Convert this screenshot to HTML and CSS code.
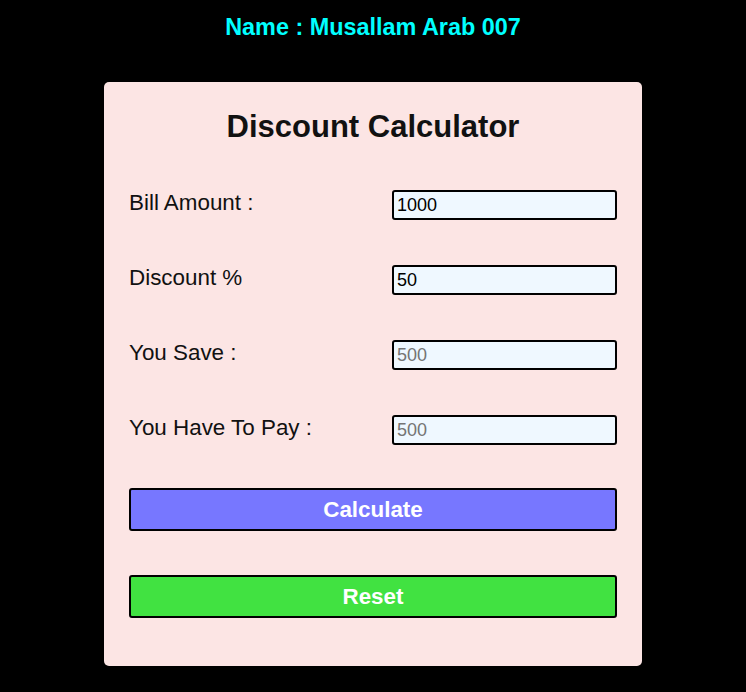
FILE: index.html
```html
<!DOCTYPE html>
<html>
<head>
<meta charset="utf-8">
<link rel="stylesheet" href="styles.css">
</head>
<body>
<h2 class="name">Name : Musallam Arab 007</h2>
<div class="card">
  <h1 class="title">Discount Calculator</h1>
  <div class="row"><label class="label">Bill Amount :</label><input class="field" type="text" value="1000"></div>
  <div class="row"><label class="label">Discount %</label><input class="field" type="text" value="50"></div>
  <div class="row"><label class="label">You Save :</label><input class="field" type="text" placeholder="500"></div>
  <div class="row"><label class="label">You Have To Pay :</label><input class="field" type="text" placeholder="500"></div>
  <button class="btn calc">Calculate</button>
  <button class="btn reset">Reset</button>
</div>
</body>
</html>
```
FILE: styles.css
```css
html, body {
  margin: 0;
  padding: 0;
  background: #000;
  font-family: "Liberation Sans", Arial, sans-serif;
}
.name {
  margin: 0;
  padding-top: 14px;
  text-align: center;
  color: #00ffff;
  font-size: 23.4px;
  font-weight: bold;
  line-height: 27px;
}
.card {
  width: 538px;
  box-sizing: border-box;
  margin: 41px auto 0;
  background: #fce5e4;
  border-radius: 5px;
  padding: 27px 25px 48px;
  display: flex;
  flex-direction: column;
}
.title {
  margin: 0 0 45px;
  text-align: center;
  font-size: 31px;
  line-height: 36px;
  color: #111;
}
.row {
  display: flex;
  justify-content: space-between;
  align-items: center;
  height: 30px;
  margin-bottom: 45px;
}
.label {
  font-size: 22.4px;
  color: #111;
  margin-top: -4px;
}
.field {
  width: 225px;
  height: 30px;
  box-sizing: border-box;
  border: 2px solid #000;
  border-radius: 3px;
  background: #eff8ff;
  font-family: "Liberation Sans", Arial, sans-serif;
  font-size: 18px;
  padding: 0 3px;
  color: #000;
  outline: none;
}
.field::placeholder {
  color: #757575;
}
.row:nth-of-type(4) { margin-bottom: 43px; }
.btn {
  width: 100%;
  height: 43px;
  box-sizing: border-box;
  border: 2px solid #000;
  border-radius: 3px;
  color: #fff;
  font-family: "Liberation Sans", Arial, sans-serif;
  font-size: 22.4px;
  font-weight: bold;
  padding: 0;
}
.calc {
  background: #7777ff;
  margin-bottom: 44px;
}
.reset {
  background: #41e241;
}
```
